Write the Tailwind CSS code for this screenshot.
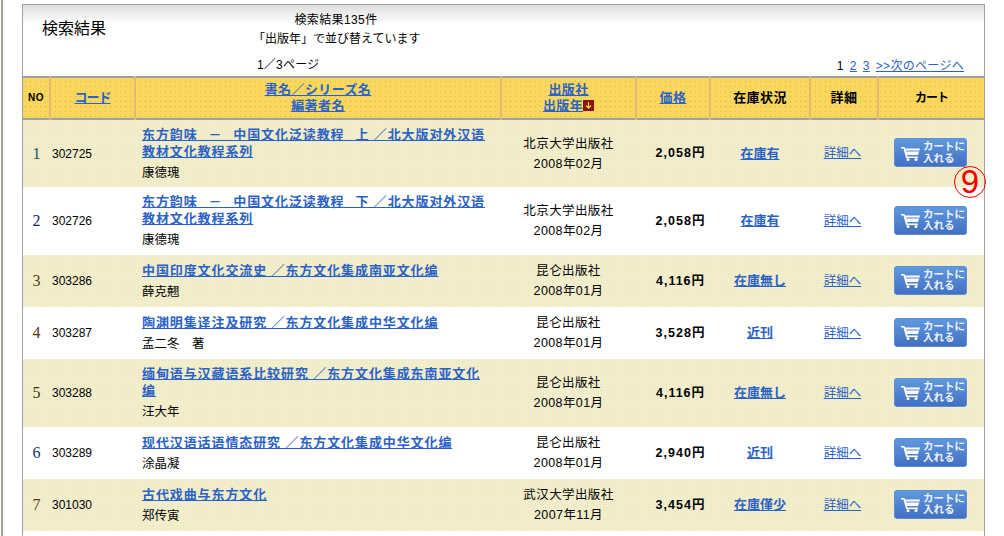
<!DOCTYPE html>
<html lang="ja">
<head>
    <meta charset="UTF-8">
    <title>検索結果</title>
    <script src="https://cdn.jsdelivr.net/npm/@tailwindcss/browser@4"></script>
</head>
<body class="bg-white h-[536px] overflow-hidden font-['Liberation_Sans','Noto_Sans_CJK_JP',sans-serif] text-[12px] text-black">
    <div class="relative h-[536px] ml-[1px] pl-[19px] border-l-2 border-[#a3a398]">
        <div class="w-[963px] h-[532px] relative top-[4px] border-t border-x border-[#a0a0a0]">

            <!-- Heading -->
            <div class="h-[71px] flex bg-gradient-to-b from-[#dedede] to-white to-[27%]">
                <div class="w-[230px] pl-[19px] pt-[14px] text-[16px] leading-[20px]">検索結果</div>
                <div class="w-[166px] pt-[6px]">
                    <p class="text-center leading-[19px] tracking-[0.4px] w-[166px]">検索結果135件</p>
                    <p class="text-center leading-[19px] whitespace-nowrap w-[166px]">「出版年」で並び替えています</p>
                    <p class="leading-[19px] mt-[7px] pl-[4px] tracking-[0.2px]">1／3ページ</p>
                </div>
                <div class="flex-1 flex justify-end items-end pb-[1px] pr-[20px] gap-[6px] leading-[18px] tracking-[0.3px]">
                    <span>1</span>
                    <a href="#" class="text-[#2b62c8] underline">2</a>
                    <a href="#" class="text-[#2b62c8] underline">3</a>
                    <a href="#" class="text-[#2b62c8] underline">&gt;&gt;次のページへ</a>
                </div>
            </div>

            <!-- Results -->
            <table class="w-[961px] table-fixed border-collapse">
                <colgroup>
                    <col class="w-[27px]"><col class="w-[85px]"><col class="w-[366px]"><col class="w-[135px]">
                    <col class="w-[74px]"><col class="w-[100px]"><col class="w-[68px]"><col class="w-[106px]">
                </colgroup>
                <thead>
                    <tr class="h-[42px] border-y-2 border-[#a0a0a0] bg-[#f8d75c] bg-[radial-gradient(#dcb44e_0.7px,transparent_0.9px)] bg-[length:5px_5px] text-[13px] leading-[16px] font-bold text-center tracking-[0.4px]">
                        <th class="text-[10px] border-r-2 border-[#e5b878]">NO</th>
                        <th class="border-r-2 border-[#e5b878]"><a href="#" class="text-[#2b62c8] underline tracking-[-1px]">コード</a></th>
                        <th class="border-r-2 border-[#e5b878]"><a href="#" class="text-[#2b62c8] underline">書名／シリーズ名<br>編著者名</a></th>
                        <th class="border-r-2 border-[#e5b878]">
                            <a href="#" class="text-[#2b62c8] underline">出版社<br>出版年</a><svg width="11" height="11" viewBox="0 0 11 11" class="inline-block align-[-1px]"><rect width="11" height="11" fill="#8a1212"/><path d="M5.5 2v6M3 5.5l2.5 2.7L8 5.5" fill="none" stroke="#f8d75c" stroke-width="1.2"/></svg>
                        </th>
                        <th class="border-r-2 border-[#e5b878]"><a href="#" class="text-[#2b62c8] underline">価格</a></th>
                        <th class="border-r-2 border-[#e5b878]">在庫状況</th>
                        <th class="border-r-2 border-[#e5b878]">詳細</th>
                        <th class="text-[12px] tracking-[-1px]">カート</th>
                    </tr>
                </thead>
                <tbody id="results-body"></tbody>
            </table>
        </div>

        <!-- Annotation -->
        <div class="absolute left-[951px] top-[166px] w-[32px] h-[32px] rounded-full border-[1.5px] border-[#f00000] text-[#f00000] text-[33px] leading-[29px] text-center">9</div>
    </div>

<script>
    const books = [
        { no: 1, color: 'text-[#14506e]', code: '302725', title: '东方韵味&ensp;&thinsp;－&ensp;&thinsp;中国文化泛读教程&ensp;&thinsp;上 ／北大版对外汉语教材文化教程系列', author: '康德瑰', pub: '北京大学出版社', date: '2008年02月', price: '2,058円', stock: '在庫有', h: 'h-[68px]' },
        { no: 2, color: 'text-[#14206e]', code: '302726', title: '东方韵味&ensp;&thinsp;－&ensp;&thinsp;中国文化泛读教程&ensp;&thinsp;下 ／北大版对外汉语教材文化教程系列', author: '康德瑰', pub: '北京大学出版社', date: '2008年02月', price: '2,058円', stock: '在庫有', h: 'h-[68px]' },
        { no: 3, color: 'text-[#5a3a10]', code: '303286', title: '中国印度文化交流史 ／东方文化集成南亚文化编', author: '薛克翹', pub: '昆仑出版社', date: '2008年01月', price: '4,116円', stock: '在庫無し', h: 'h-[52px]' },
        { no: 4, color: 'text-[#5a3a10]', code: '303287', title: '陶渊明集译注及研究 ／东方文化集成中华文化编', author: '孟二冬　著', pub: '昆仑出版社', date: '2008年01月', price: '3,528円', stock: '近刊', h: 'h-[52px]' },
        { no: 5, color: 'text-[#3a3010]', code: '303288', title: '缅甸语与汉藏语系比较研究 ／东方文化集成东南亚文化编', author: '汪大年', pub: '昆仑出版社', date: '2008年01月', price: '4,116円', stock: '在庫無し', h: 'h-[68px]' },
        { no: 6, color: 'text-[#14306e]', code: '303289', title: '现代汉语话语情态研究 ／东方文化集成中华文化编', author: '涂晶凝', pub: '昆仑出版社', date: '2008年01月', price: '2,940円', stock: '近刊', h: 'h-[52px]' },
        { no: 7, color: 'text-[#5a3a10]', code: '301030', title: '古代戏曲与东方文化', author: '郑传寅', pub: '武汉大学出版社', date: '2007年11月', price: '3,454円', stock: '在庫僅少', h: 'h-[52px]' },
    ];

    const resultsBody = document.getElementById('results-body');
    books.forEach((book, i) => {
        const row = document.createElement('tr');
        const stripe = i % 2 === 0 ? 'bg-[#f2eecb] bg-[radial-gradient(#ebe6bd_0.7px,transparent_0.9px)] bg-[length:3px_3px]' : 'bg-white';
        row.className = `${book.h} ${stripe}`;
        row.innerHTML = `
            <td class="text-center text-[16px] font-['Liberation_Serif',serif] ${book.color}">${book.no}</td>
            <td class="pl-[2px]">${book.code}</td>
            <td class="pl-[7px] pr-[12px] font-['Liberation_Sans','Noto_Sans_CJK_SC',sans-serif]">
                <a href="#" class="block text-[13px] leading-[17px] font-bold tracking-[0.9px] text-[#2b62c8] underline">${book.title}</a>
                <p class="mt-[5px] text-[12.5px] leading-[17px]">${book.author}</p>
            </td>
            <td class="text-center text-[12.5px] leading-[20px] tracking-[0.4px]">${book.pub}<br>${book.date}</td>
            <td class="text-center font-bold text-[12.5px] tracking-[1px] pl-[15px]">${book.price}</td>
            <td class="text-center text-[13px] font-bold"><a href="#" class="text-[#2b62c8] underline">${book.stock}</a></td>
            <td class="text-center text-[12.5px] pr-[3px]"><a href="#" class="text-[#2b62c8] underline">詳細へ</a></td>
            <td class="pl-[16px] pb-[2px]">
                <button class="w-[73px] h-[29px] rounded-[3px] border border-[#5d8fd6] bg-gradient-to-b from-[#5f98dc] to-[#4470c4] flex items-center pl-[6px] gap-[3px] text-white/90 font-bold text-[10.5px] leading-[11.5px] text-left">
                    <svg width="19" height="16" viewBox="0 0 19 16" class="shrink-0" fill="#fff"><path d="M0 2h3.5l.6 1.5H19l-2 6.5H6l.5 1.5H17V13H5L2.5 3.5H0z"/><path d="M5 6h13" stroke="#4f82cf" stroke-width="1"/><circle cx="7" cy="14.5" r="1.5"/><circle cx="15" cy="14.5" r="1.5"/></svg>
                    <span>カートに<br>入れる</span>
                </button>
            </td>
        `;
        resultsBody.appendChild(row);
    });
</script>
</body>
</html>
